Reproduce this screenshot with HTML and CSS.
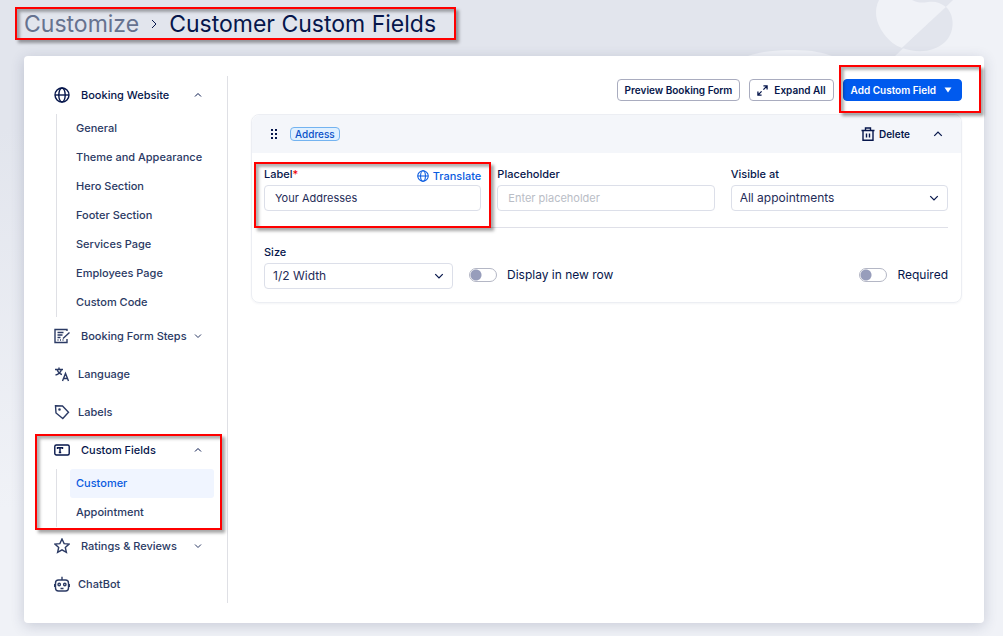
FILE: index.html
```
<!DOCTYPE html>
<html lang="en">
<head>
  <meta charset="utf-8">
  <title>Customer Custom Fields</title>
  <link rel="stylesheet" href="styles.css">
</head>
<body>
  <svg class="backdrop" viewBox="0 0 1003 636" preserveAspectRatio="none" aria-hidden="true">
    <path fill="#f0f2f7" d="M953 0H1003V636H960V200L895 56Z"/>
    <path fill="#f0f2f7" d="M748 56C762 51 778 50 795 50C812 50 824 53 832 56Z"/>
    <path fill="#f0f2f7" d="M879 0C874 10 875 22 884 34C889 41 896 46 902 48L946 7C940 2 934 1 928 2C922 3 918 3 912 0Z"/>
    <path fill="#e2e5ed" d="M902 48L946 7C955 15 955 33 945 42C933 53 916 53 902 48Z"/>
  </svg>

  <!-- Shared icons -->
  <svg class="sprite" aria-hidden="true">
    <symbol id="globe" viewBox="0 0 16 16"><circle cx="8" cy="8" r="7"/><ellipse cx="8" cy="8" rx="3.2" ry="7"/><path d="M1 8h14"/></symbol>
    <symbol id="up" viewBox="0 0 8 8"><path d="M1 5.5l3-3 3 3"/></symbol>
    <symbol id="down" viewBox="0 0 8 8"><path d="M1 2.5l3 3 3-3"/></symbol>
  </svg>

  <header class="page-header">
    <nav class="breadcrumb">
      <a href="#">Customize</a>
      <svg class="icon crumb-arrow" viewBox="0 0 6 10"><path d="M1 1l4 4-4 4"/></svg>
      <h1>Customer Custom Fields</h1>
      <div class="mark mark-title"></div>
    </nav>
  </header>

  <div class="card">
    <aside class="sidebar">
      <button class="nav-item active">
        <svg class="icon"><use href="#globe"/></svg>
        <span>Booking Website</span>
        <svg class="icon chevron"><use href="#up"/></svg>
      </button>
      <div class="sub-nav">
        <a href="#">General</a>
        <a href="#">Theme and Appearance</a>
        <a href="#">Hero Section</a>
        <a href="#">Footer Section</a>
        <a href="#">Services Page</a>
        <a href="#">Employees Page</a>
        <a href="#">Custom Code</a>
      </div>
      <button class="nav-item">
        <svg class="icon" viewBox="0 0 16 16"><path d="M13 3V1.500H1v13h12V11M3.500 4.500h6M3.500 7h5M3.500 9.500h3M3.500 12h1m1.500 0h1m1.500 0h1M15.500 4.500L9 10.500"/></svg>
        <span>Booking Form Steps</span>
        <svg class="icon chevron"><use href="#down"/></svg>
      </button>
      <a class="nav-item" href="#">
        <svg class="icon" viewBox="0 0 16 16"><path d="M1 3.500h8M5 1.500v2M7.500 3.500C6.500 6.500 4 8.500 1.500 9M3 3.500C4 6 6 8 8 8.500M8.500 15l3-7.500 3 7.500M9.500 12.500h4"/></svg>
        <span>Language</span>
      </a>
      <a class="nav-item" href="#">
        <svg class="icon" viewBox="0 0 16 16"><path d="M1.500 1.800L8.500 2l6 6.200-5.700 6.300L2 9z"/><circle cx="5.500" cy="5.500" r=".6"/></svg>
        <span>Labels</span>
      </a>
      <div class="nav-group">
        <button class="nav-item active">
          <svg class="icon" viewBox="0 0 16 16"><rect x=".8" y="3" width="14.400" height="10" rx="1.500"/><path d="M3.500 7V5.800h5V7M6 5.800v4.700M4.800 10.500h2.400"/></svg>
          <span>Custom Fields</span>
          <svg class="icon chevron"><use href="#up"/></svg>
        </button>
        <div class="sub-nav">
          <a class="current" href="#">Customer</a>
          <a href="#">Appointment</a>
        </div>
        <div class="mark mark-nav"></div>
      </div>
      <button class="nav-item">
        <svg class="icon" viewBox="0 0 16 16"><path d="M8 1l2.100 4.600 5 .5-3.800 3.300 1.100 5L8 11.900l-4.400 2.500 1.100-5L.9 6.100l5-.5z"/></svg>
        <span>Ratings &amp; Reviews</span>
        <svg class="icon chevron"><use href="#down"/></svg>
      </button>
      <a class="nav-item" href="#">
        <svg class="icon" viewBox="0 0 16 16"><rect x="1.500" y="4" width="13" height="11" rx="3"/><path d="M8 4V.8M.6 8v3M15.400 8v3M6.500 12.500h3"/><circle cx="5.200" cy="8.500" r="1.200"/><circle cx="10.800" cy="8.500" r="1.200"/></svg>
        <span>ChatBot</span>
      </a>
    </aside>

    <main class="content">
      <div class="toolbar">
        <button class="btn">Preview Booking Form</button>
        <button class="btn">
          <svg class="icon" viewBox="0 0 12 12"><path d="M7 1h4v4M11 1L7 5M5 11H1V7M1 11l4-4"/></svg>
          Expand All
        </button>
        <div class="marked">
          <button class="btn btn-primary">
            Add Custom Field
            <svg class="caret" viewBox="0 0 8 6"><path d="M.5.500h7L4 5.500z"/></svg>
          </button>
          <div class="mark mark-add"></div>
        </div>
      </div>

      <section class="field-panel">
        <div class="panel-head">
          <svg class="grip" viewBox="0 0 6 10"><path d="M0 0h2v2H0zM4 0h2v2H4zM0 4h2v2H0zM4 4h2v2H4zM0 8h2v2H0zM4 8h2v2H4z"/></svg>
          <span class="tag">Address</span>
          <button class="delete">
            <svg class="icon" viewBox="0 0 14 14"><path d="M.5 3.500h13M4.500 3.500V1h5v2.500M2 3.500v9.800h10V3.500M5.500 6.500v4M8.500 6.500v4"/></svg>
            Delete
          </button>
          <button class="collapse" aria-label="Collapse"><svg class="icon"><use href="#up"/></svg></button>
        </div>
        <div class="panel-body">
          <div class="row">
            <div class="field marked">
              <div class="label-row">
                <label for="label">Label<span class="required">*</span></label>
                <button class="translate"><svg class="icon"><use href="#globe"/></svg>Translate</button>
              </div>
              <input type="text" id="label" value="Your Addresses">
              <div class="mark mark-label"></div>
            </div>
            <div class="field">
              <label for="placeholder">Placeholder</label>
              <input type="text" id="placeholder" placeholder="Enter placeholder">
            </div>
            <div class="field">
              <label for="visible">Visible at</label>
              <div class="select">
                <select id="visible"><option>All appointments</option></select>
                <svg class="icon"><use href="#down"/></svg>
              </div>
            </div>
          </div>
          <div class="row options">
            <div class="field size">
              <label for="size">Size</label>
              <div class="select">
                <select id="size"><option>1/2 Width</option></select>
                <svg class="icon"><use href="#down"/></svg>
              </div>
            </div>
            <label class="toggle"><input type="checkbox">Display in new row</label>
            <label class="toggle last"><input type="checkbox">Required</label>
          </div>
        </div>
      </section>
    </main>
  </div>
</body>
</html>
```
FILE: styles.css
```
* {
  box-sizing: border-box;
}

body {
  margin: 0;
  min-height: 100vh;
  padding: 0 19px 13px 24px;
  background: linear-gradient(#e2e5ed 20%, #f0f2f7 80%);
  color: #06164b;
  font-family: Inter, "Liberation Sans", sans-serif;
  font-size: 11px;
  line-height: 16px;
  display: flex;
  flex-direction: column;
}

button, input, select {
  font: inherit;
  color: inherit;
}

button {
  border: none;
  background: none;
  padding: 0;
  cursor: pointer;
}

a {
  color: inherit;
  text-decoration: none;
}

.backdrop {
  position: absolute;
  inset: 0;
  width: 100%;
  height: 100%;
  z-index: -1;
}

.sprite {
  display: none;
}

.icon {
  width: 16px;
  height: 16px;
  flex: none;
  fill: none;
  stroke: currentColor;
  stroke-width: 1.4;
}

/* Header */
.page-header {
  height: 56px;
  padding-top: 8px;
}

.breadcrumb {
  position: relative;
  display: inline-flex;
  align-items: center;
  gap: 12px;
  font-size: 23px;
  line-height: 32px;
}

.breadcrumb a {
  color: #66728f;
}

.breadcrumb h1 {
  margin: 0;
  font-size: inherit;
  font-weight: 400;
}

.crumb-arrow {
  width: 6px;
  height: 10px;
  stroke-width: 1;
}

/* Red callouts */
.marked {
  position: relative;
}

.mark {
  position: absolute;
  border: 2px solid #f00;
  box-shadow: 3px 3px 3px rgba(0, 0, 0, 0.35), inset 3px 3px 3px rgba(0, 0, 0, 0.3);
  pointer-events: none;
}

.mark-title {
  inset: -1px -20px 0 -9px;
}

.mark-nav {
  inset: 3px 5px -3px -9px;
}

.mark-add {
  inset: -14px -19px -12px -4px;
}

.mark-label {
  inset: -4px -10px -17px -10px;
}

/* Card */
.card {
  flex: 1;
  display: flex;
  padding: 20px 22px 20px 20px;
  background: #fff;
  border-radius: 4px;
  box-shadow: 0 3px 14px rgba(40, 50, 90, 0.2);
}

.sidebar {
  width: 184px;
  flex: none;
  border-right: 1px solid #dfe0e5;
  color: #2b3a64;
  font-weight: 500;
  white-space: nowrap;
}

.nav-group {
  position: relative;
}

.nav-item {
  display: flex;
  align-items: center;
  gap: 8px;
  width: 100%;
  height: 38px;
  padding: 0 25px 0 10px;
  text-align: left;
}

button.nav-item {
  gap: 0;
}

button.nav-item span {
  margin-left: 11px;
}

.nav-item.active {
  color: #06164b;
}

.nav-item .chevron {
  width: 8px;
  height: 8px;
  margin-left: auto;
  stroke-width: 1;
}

.sub-nav {
  margin: 0 13px 0 12px;
  padding-left: 13px;
  border-left: 1px solid #dfe0e5;
}

.sub-nav a {
  display: block;
  padding: 0 6px;
  border-radius: 3px;
  line-height: 29px;
}

.sub-nav .current {
  background: #f0f5ff;
  color: #0a5be0;
}

.content {
  flex: 1;
  padding: 3px 0 0 23px;
}

.toolbar {
  display: flex;
  justify-content: flex-end;
  gap: 9px;
  margin-bottom: 13px;
}

.btn {
  display: flex;
  align-items: center;
  gap: 6px;
  height: 22px;
  padding: 0 7px;
  border: 1px solid #a9acbf;
  border-radius: 4px;
  background: #fff;
  font-size: 10px;
  font-weight: 600;
}

.btn .icon {
  width: 11px;
  height: 11px;
}

.btn-primary {
  gap: 8px;
  border-color: #005aee;
  background: #005aee;
  color: #fff;
}

.caret {
  width: 8px;
  height: 6px;
  margin-right: 2px;
  fill: currentColor;
}

/* Field panel */
.field-panel {
  border: 1px solid #eceef3;
  border-radius: 8px;
  box-shadow: 0 1px 2px rgba(40, 50, 90, 0.05);
}

.panel-head {
  display: flex;
  align-items: center;
  height: 38px;
  padding: 0 18px 0 19px;
  border-radius: 8px 8px 0 0;
  background: #f4f6fa;
}

.grip {
  width: 6px;
  height: 10px;
  fill: currentColor;
}

.tag {
  margin-left: 13px;
  padding: 0 4px;
  height: 14px;
  border: 1px solid #73b3f0;
  border-radius: 4px;
  background: #e0f0ff;
  color: #0a50c8;
  font-size: 10px;
  font-weight: 500;
  line-height: 12px;
}

.delete {
  display: flex;
  align-items: center;
  gap: 4px;
  margin-left: auto;
  font-size: 10px;
  font-weight: 600;
}

.delete .icon {
  width: 14px;
  height: 14px;
}

.collapse {
  display: flex;
  margin-left: 23px;
}

.collapse .icon {
  width: 10px;
  height: 10px;
  stroke-width: 1;
}

.panel-body {
  padding: 13px 13px 13px 12px;
}

.row {
  display: flex;
  align-items: flex-end;
  gap: 16px;
}

.field {
  flex: 1;
  min-width: 0;
  display: flex;
  flex-direction: column;
  gap: 3px;
}

.field label {
  font-weight: 500;
}

.label-row {
  display: flex;
  justify-content: space-between;
}

.required {
  color: #e00;
}

.translate {
  display: flex;
  align-items: center;
  gap: 4px;
  padding-top: 3px;
  height: 16px;
  color: #0a5be0;
  font-weight: 500;
}

.translate .icon {
  width: 12px;
  height: 12px;
}

.field input, .field select {
  width: 100%;
  height: 26px;
  padding: 0 10px;
  border: 1px solid #dcdfe9;
  border-radius: 4px;
  background: #fff;
  color: #1f2c58;
}

.field input::placeholder {
  color: #b9bdc6;
}

.select {
  position: relative;
}

.field select {
  display: block;
  padding: 0 8px;
  appearance: none;
  font-size: 12px;
}

.select .icon {
  position: absolute;
  right: 9px;
  top: 8px;
  width: 10px;
  height: 10px;
  stroke-width: 1;
}

.options {
  margin-top: 16px;
  padding-top: 16px;
  border-top: 1px solid #dfe0e8;
}

.size {
  flex: 0 0 189px;
}

.toggle {
  display: flex;
  align-items: center;
  gap: 10px;
  height: 28px;
  font-size: 12px;
}

.toggle.last {
  margin-left: auto;
}

.toggle input {
  appearance: none;
  width: 28px;
  height: 14px;
  margin: 0;
  border: 1px solid #b4b7c5;
  border-radius: 7px;
  background: radial-gradient(circle at 6px 6px, #979dbb 5px, #fff 6px);
}
```
